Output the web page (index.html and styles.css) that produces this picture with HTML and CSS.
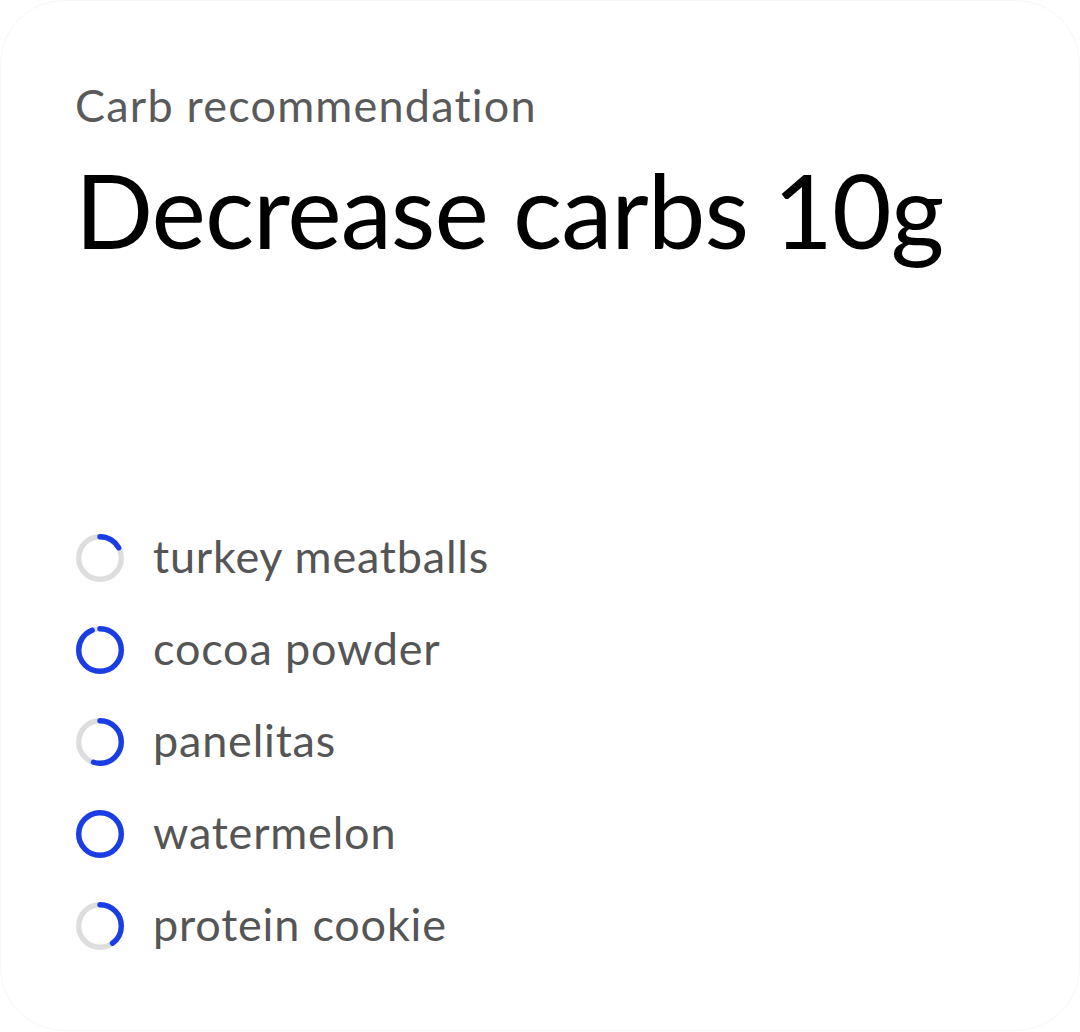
FILE: index.html
```html
<!DOCTYPE html>
<html>
<head>
<meta charset="utf-8">
<link rel="stylesheet" href="styles.css">
</head>
<body>
<div class="card">
  <div class="label">Carb recommendation</div>
  <div class="title">Decrease carbs 10g</div>
  <ul class="list">
    <li class="item">
      <svg class="ring" viewBox="0 0 48 48"><circle class="track" cx="24" cy="24" r="21.3"/><circle class="bar" cx="24" cy="24" r="21.3" pathLength="100" stroke-dasharray="17 100" transform="rotate(-90 24 24)"/></svg>
      <span class="name">turkey meatballs</span>
    </li>
    <li class="item">
      <svg class="ring" viewBox="0 0 48 48"><circle class="track" cx="24" cy="24" r="21.3"/><circle class="bar" cx="24" cy="24" r="21.3" pathLength="100" stroke-dasharray="94 100" transform="rotate(-90 24 24)"/></svg>
      <span class="name">cocoa powder</span>
    </li>
    <li class="item">
      <svg class="ring" viewBox="0 0 48 48"><circle class="track" cx="24" cy="24" r="21.3"/><circle class="bar" cx="24" cy="24" r="21.3" pathLength="100" stroke-dasharray="55 100" transform="rotate(-90 24 24)"/></svg>
      <span class="name">panelitas</span>
    </li>
    <li class="item">
      <svg class="ring" viewBox="0 0 48 48"><circle class="track" cx="24" cy="24" r="21.3"/><circle class="bar" cx="24" cy="24" r="21.3" pathLength="100" stroke-dasharray="99 100" transform="rotate(-90 24 24)"/></svg>
      <span class="name">watermelon</span>
    </li>
    <li class="item">
      <svg class="ring" viewBox="0 0 48 48"><circle class="track" cx="24" cy="24" r="21.3"/><circle class="bar" cx="24" cy="24" r="21.3" pathLength="100" stroke-dasharray="40 100" transform="rotate(-90 24 24)"/></svg>
      <span class="name">protein cookie</span>
    </li>
  </ul>
</div>
</body>
</html>
```
FILE: styles.css
```css
html, body {
  margin: 0;
  padding: 0;
  background: #ffffff;
}
body {
  font-family: Lato, "Noto Sans", sans-serif;
}
.card {
  box-sizing: border-box;
  width: 1080px;
  height: 1031px;
  border: 1px solid #f7f7f7;
  border-radius: 64px;
  padding: 74px 0 0 74px;
}
.label {
  font-size: 45px;
  line-height: 60px;
  letter-spacing: 1.2px;
  color: #5a5a5a;
}
.title {
  margin-top: 14px;
  font-size: 103px;
  line-height: 120px;
  letter-spacing: -1.05px;
  color: #000000;
}
.list {
  list-style: none;
  margin: 259px 0 0 1px;
  padding: 0;
  display: flex;
  flex-direction: column;
  gap: 32px;
}
.item {
  display: flex;
  align-items: center;
  gap: 29px;
  height: 60px;
}
.ring {
  width: 48px;
  height: 48px;
  flex: none;
}
.track {
  fill: none;
  stroke: #dddddd;
  stroke-width: 5.4;
}
.bar {
  fill: none;
  stroke: #1a3ee4;
  stroke-width: 5.4;
  stroke-linecap: round;
}
.name {
  font-size: 45px;
  letter-spacing: 0.8px;
  color: #555555;
  padding-bottom: 5px;
}
```
